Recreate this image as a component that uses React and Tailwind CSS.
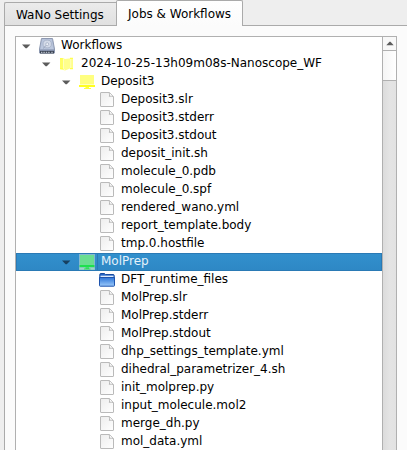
import React from "react";

const rows = [
  { level: 0, icon: "drive", label: "Workflows", open: true },
  { level: 1, icon: "workflow", label: "2024-10-25-13h09m08s-Nanoscope_WF", open: true },
  { level: 2, icon: "pending", label: "Deposit3", open: true },
  { level: 3, icon: "file", label: "Deposit3.slr" },
  { level: 3, icon: "file", label: "Deposit3.stderr" },
  { level: 3, icon: "file", label: "Deposit3.stdout" },
  { level: 3, icon: "file", label: "deposit_init.sh" },
  { level: 3, icon: "file", label: "molecule_0.pdb" },
  { level: 3, icon: "file", label: "molecule_0.spf" },
  { level: 3, icon: "file", label: "rendered_wano.yml" },
  { level: 3, icon: "file", label: "report_template.body" },
  { level: 3, icon: "file", label: "tmp.0.hostfile" },
  { level: 2, icon: "done", label: "MolPrep", open: true, selected: true },
  { level: 3, icon: "folder", label: "DFT_runtime_files" },
  { level: 3, icon: "file", label: "MolPrep.slr" },
  { level: 3, icon: "file", label: "MolPrep.stderr" },
  { level: 3, icon: "file", label: "MolPrep.stdout" },
  { level: 3, icon: "file", label: "dhp_settings_template.yml" },
  { level: 3, icon: "file", label: "dihedral_parametrizer_4.sh" },
  { level: 3, icon: "file", label: "init_molprep.py" },
  { level: 3, icon: "file", label: "input_molecule.mol2" },
  { level: 3, icon: "file", label: "merge_dh.py" },
  { level: 3, icon: "file", label: "mol_data.yml" },
];

const indents = ["pl-0", "pl-5", "pl-10", "pl-15"];

function Icon({ kind }) {
  const common = { width: 18, height: 18, viewBox: "0 0 18 18", className: "shrink-0" };
  if (kind === "drive")
    return (
      <svg {...common}>
        <path d="M3.5 1.5H14.5L16.5 12V16H1.5V12Z" fill="#b3bfd8" stroke="#8e99b1" />
        <path d="M4.5 2.5H13.5L15.2 12H2.8Z" fill="#bcc8de" />
        <ellipse cx="9.2" cy="7" rx="4.2" ry="3.9" fill="#d3dae8" stroke="#a1acc3" strokeWidth=".8" />
        <circle cx="9.2" cy="7.2" r="1.5" fill="#eef1f7" stroke="#9ca7be" strokeWidth=".7" />
        <path d="M5 11.5L8.2 8.4" stroke="#8f9bb4" strokeWidth=".8" />
        <path d="M1.5 12.5H16.5V14H1.5Z" fill="#8490aa" />
        <path d="M2 14H16V16.5H2Z" fill="#3b4454" />
        <path d="M3 15.3H12M13.3 15.3H15" stroke="#d6dbe4" strokeDasharray="1.4 1" />
      </svg>
    );
  if (kind === "workflow")
    return (
      <svg {...common}>
        <path d="M2 3.5L5 3L7 4L15 3V14L12 13.5L7 15.5L2 14Z" fill="#ffff8c" />
        <path d="M2 3.5L5 3V13.5L2 14Z" fill="#ffff68" />
        <path d="M5.5 4V13.5L7 15M12.7 4V13.5" stroke="#ffffbc" fill="none" />
        <path d="M2 3.7H4.5M12 3.4H15M2 13.7H5M12 13.7H15" stroke="#ffff50" strokeWidth="1.2" />
      </svg>
    );
  if (kind === "pending")
    return (
      <svg {...common}>
        <rect x="2" y="2" width="14" height="9.5" fill="#ffff80" />
        <path d="M1 12H17V14H1Z" fill="#ffff20" />
        <path d="M7.5 14H11V15H13V16H6V15H7.5Z" fill="#ffff40" />
      </svg>
    );
  if (kind === "done")
    return (
      <svg {...common}>
        <rect x="1" y="1" width="16" height="16" fill="#84b8cf" />
        <rect x="2" y="2" width="14" height="10" fill="#6ade90" />
        <path d="M1.5 12H16.5V14.3H1.5Z" fill="#1ee04e" />
        <path d="M1.5 14.5H16.5V16.5H1.5Z" fill="#9dd8c2" />
        <path d="M7.5 14.3H11V15.5H12.5V16.5H6V15.5H7.5Z" fill="#30e058" />
      </svg>
    );
  if (kind === "folder")
    return (
      <svg {...common}>
        <defs>
          <linearGradient id="folderBlue" x1="0" y1="0" x2="0" y2="1">
            <stop offset="0" stopColor="#2b74d8" />
            <stop offset="1" stopColor="#9dcbfb" />
          </linearGradient>
        </defs>
        <path d="M1.8 7V3.5Q1.8 2.5 2.8 2.5H6.5L7.5 3.5H15Q16.2 3.5 16.2 4.5V7" fill="#2465c8" stroke="#174a9f" />
        <path d="M2.5 5.3H15.5" stroke="#f4faff" strokeWidth="1.2" />
        <path d="M1.5 6.5H16.5V14.5Q16.5 15.2 15.8 15.2H2.2Q1.5 15.2 1.5 14.5Z" fill="url(#folderBlue)" stroke="#1d53ad" />
      </svg>
    );
  return (
    <svg {...common}>
      <defs>
        <linearGradient id="paper" x1="0" y1="0" x2="1" y2="1">
          <stop offset="0" stopColor="#ededed" />
          <stop offset="1" stopColor="#ffffff" />
        </linearGradient>
      </defs>
      <path d="M3 1.5H11.5L15.5 5.5V15Q15.5 15.5 15 15.5H3Q2.5 15.5 2.5 15V2Q2.5 1.5 3 1.5Z" fill="url(#paper)" stroke="#bababa" />
      <path d="M11.2 1.8Q12 4 11.3 5.4Q13 4.7 15.2 5.6" fill="#ffffff" stroke="#a8a8a8" strokeWidth=".8" />
    </svg>
  );
}

function Row({ level, icon, label, open, selected }) {
  return (
    <div
      className={
        "flex h-[18px] shrink-0 " +
        (selected
          ? "border border-[#2a7ab5] bg-linear-to-b from-[#3290cd] to-[#2e88c5] text-[#e4f1fa]"
          : "border border-transparent text-black")
      }
    >
      <div className={"flex -my-px -ml-px h-[18px] flex-1 items-center " + indents[level]}>
        <div className="flex w-[22px] shrink-0 pl-[6px]">
          {open && (
            <svg width="9" height="5" viewBox="0 0 9 5">
              <path d="M0 .6H8.4L4.8 4.2H3.6Z" fill={selected ? "#174060" : "#5c5c5c"} />
            </svg>
          )}
        </div>
        <Icon kind={icon} />
        <span
          className={
            "ml-px h-[18px] flex-1 border-l pl-[3px] whitespace-pre leading-[16px] " +
            (selected ? "border-[#2a7ab5]" : "border-transparent")
          }
        >
          {label}
        </span>
      </div>
    </div>
  );
}

export default function App() {
  return (
    <div className="flex h-[450px] w-[407px] flex-col overflow-hidden bg-[#eeeeee] pl-1 font-['DejaVu_Sans',sans-serif] text-[12px] text-black">
      <div className="flex h-[26px] shrink-0">
        <div className="mt-[2px] w-[112px] shrink-0 rounded-tl-[2px] border border-r-0 border-[#aaaaaa] bg-linear-to-b from-[#ebebeb] to-[#e0e0e0] pl-[11px] leading-[24px] whitespace-nowrap">
          WaNo Settings
        </div>
        <div className="w-[127px] shrink-0 rounded-t-[2px] border border-b-0 border-[#aaaaaa] bg-linear-to-b from-white to-[#fbfbfb] pl-[11px] leading-[26px] whitespace-nowrap">
          Jobs &amp; Workflows
        </div>
        <div className="flex-1 border-b border-[#aaaaaa]" />
      </div>
      <div className="flex min-h-0 flex-1 border-l border-[#aaaaaa] bg-[#fbfbfb] pt-[10px] pr-[10px] pl-[10px]">
        <div className="flex min-w-0 flex-1 border border-b-0 border-[#b0b0b0] bg-white">
          <div className="flex min-w-0 flex-1 flex-col overflow-hidden">
            {rows.map((row) => (
              <Row key={row.label} {...row} />
            ))}
          </div>
          <div className="flex w-[14px] shrink-0 flex-col border-l border-[#b0b0b0] bg-linear-to-r from-[#dcdcdc] via-[#e4e4e4] to-[#e2e2e2]">
            <div className="flex h-[14px] shrink-0 items-center justify-center border-b border-[#b0b0b0] bg-[#f8f8f8]">
              <svg width="8" height="5" viewBox="0 0 8 5">
                <path d="M0.3 4.3L3.5 .8H4.5L7.7 4.3Z" fill="#5c5c5c" />
              </svg>
            </div>
            <div className="h-[30px] shrink-0 border-b border-[#b0b0b0] bg-linear-to-r from-[#f5f5f5] to-white" />
          </div>
        </div>
      </div>
    </div>
  );
}
